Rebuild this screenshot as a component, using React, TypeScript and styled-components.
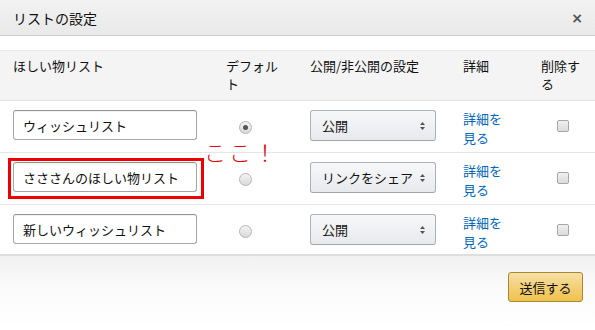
import React from "react";
import styled, { createGlobalStyle } from "styled-components";

const Global = createGlobalStyle`
  html, body { margin: 0; padding: 0; background: #fff; }
  body { font-family: "Noto Sans CJK JP", "Noto Sans", sans-serif; color: #111; font-size: 13px; }
`;

const Dialog = styled.div`
  width: 595px;
  height: 330px;
  display: flex;
  flex-direction: column;
  background: #fff;
  overflow: hidden;
`;

const TitleBar = styled.div`
  height: 35px;
  display: flex;
  align-items: center;
  justify-content: space-between;
  padding: 0 12px 0 13px;
  background: linear-gradient(#f2f2f2, #e9e9e9);
  border-bottom: 1px solid #cfcfcf;
  font-size: 14px;
  color: #111;
`;

const Close = styled.span`
  font-family: "DejaVu Sans", sans-serif;
  font-size: 14px;
  font-weight: bold;
  color: #555;
`;

const Spacer = styled.div`
  height: 14px;
`;

const Grid = styled.div`
  display: grid;
  grid-template-columns: 213px 84px 153px 78px 1fr;
  padding-left: 13px;
  align-items: start;
`;

const HeadRow = styled(Grid)`
  background: #f4f4f4;
  border-top: 1px solid #e8e8e8;
  border-bottom: 1px solid #e3e3e3;
  padding-top: 6px;
  box-sizing: border-box;
  height: 51px;
  line-height: 18px;
`;

const HeadCell = styled.div<{ $w?: number }>`
  ${(p) => (p.$w ? `width: ${p.$w}px;` : "")}
  color: #111;
`;

const Row = styled(Grid)`
  height: 52px;
  padding-top: 9px;
  border-bottom: 1px solid #e6e6e6;
  box-sizing: border-box;
  position: relative;
  &:last-child {
    height: 51px;
    border-bottom: 2px solid #dedede;
  }
`;

const TextInput = styled.div`
  width: 184px;
  height: 30px;
  box-sizing: border-box;
  border: 1px solid #a6a6a6;
  border-top-color: #949494;
  border-radius: 3px;
  padding: 0 9px;
  display: flex;
  align-items: center;
  font-size: 13px;
  color: #111;
  box-shadow: inset 0 1px 0 rgba(0,0,0,0.05);
`;

const RadioCell = styled.div`
  padding: 11px 0 0 13px;
`;

const Radio = styled.span<{ $on?: boolean }>`
  display: block;
  width: 13px;
  height: 13px;
  border-radius: 50%;
  box-sizing: border-box;
  border: 1px solid #b5b5b5;
  background: linear-gradient(#f4f4f4, #d9d9d9);
  position: relative;
  &::after {
    content: "";
    display: ${(p) => (p.$on ? "block" : "none")};
    position: absolute;
    left: 3px;
    top: 3px;
    width: 5px;
    height: 5px;
    border-radius: 50%;
    background: #555;
  }
`;

const Select = styled.div`
  width: 126px;
  height: 31px;
  box-sizing: border-box;
  border: 1px solid #adb1b8;
  border-bottom-color: #a2a6ac;
  border-radius: 3px;
  background: linear-gradient(#f7f8fa, #e7e9ec);
  display: flex;
  align-items: center;
  justify-content: space-between;
  padding: 0 10px 0 11px;
  font-size: 13px;
  color: #111;
`;

const Arrows = styled.svg`
  width: 5px;
  height: 8px;
`;

const Link = styled.a`
  display: block;
  width: 44px;
  color: #0066c0;
  font-size: 13px;
  line-height: 19px;
  text-decoration: none;
  margin-top: -1px;
`;

const CheckCell = styled.div`
  padding: 10px 0 0 16px;
`;

const Check = styled.span`
  display: block;
  width: 12px;
  height: 12px;
  box-sizing: border-box;
  border: 1px solid #a6a6a6;
  border-radius: 2px;
  background: linear-gradient(#f0f0f0, #dcdcdc);
`;

const Highlight = styled.div`
  position: absolute;
  left: 8px;
  top: 5px;
  width: 196px;
  height: 41px;
  box-sizing: border-box;
  border: 3px solid #ee0000;
  pointer-events: none;
`;

const Note = styled.div`
  position: absolute;
  left: 204px;
  top: -14px;
  font-size: 22px;
  letter-spacing: 3px;
  color: #e00000;
  font-weight: 300;
  line-height: 24px;
  pointer-events: none;
`;

const Footer = styled.div`
  flex: 1;
  display: flex;
  justify-content: flex-end;
  align-items: flex-start;
  padding: 16px 12px 0 0;
  background: linear-gradient(#f1f1f1, #fbfbfb 45%, #fff);
`;

const Button = styled.button`
  width: 75px;
  height: 30px;
  box-sizing: border-box;
  border: 1px solid #a88734;
  border-radius: 3px;
  background: linear-gradient(#f7dfa5, #f0c14b);
  font-family: inherit;
  font-size: 13px;
  color: #111;
  padding: 0;
`;

const rows = [
  { name: "ウィッシュリスト", def: true, vis: "公開" },
  { name: "さささんのほしい物リスト", def: false, vis: "リンクをシェア", mark: true },
  { name: "新しいウィッシュリスト", def: false, vis: "公開" },
];

export default function App() {
  return (
    <>
      <Global />
      <Dialog>
        <TitleBar>
          <span>リストの設定</span>
          <Close>×</Close>
        </TitleBar>
        <Spacer />
        <HeadRow>
          <HeadCell>ほしい物リスト</HeadCell>
          <HeadCell $w={56}>デフォルト</HeadCell>
          <HeadCell>公開/非公開の設定</HeadCell>
          <HeadCell>詳細</HeadCell>
          <HeadCell $w={44}>削除する</HeadCell>
        </HeadRow>
        <div>
          {rows.map((r) => (
            <Row key={r.name}>
              <TextInput>{r.name}</TextInput>
              <RadioCell>
                <Radio $on={r.def} />
              </RadioCell>
              <Select>
                <span>{r.vis}</span>
                <Arrows viewBox="0 0 5 8">
                  <path d="M0 3 L2.5 0 L5 3 Z M0 5 L2.5 8 L5 5 Z" fill="#555" />
                </Arrows>
              </Select>
              <Link href="#">詳細を見る</Link>
              <CheckCell>
                <Check />
              </CheckCell>
              {r.mark && (
                <>
                  <Highlight />
                  <Note>ここ！</Note>
                </>
              )}
            </Row>
          ))}
        </div>
        <Footer>
          <Button>送信する</Button>
        </Footer>
      </Dialog>
    </>
  );
}
